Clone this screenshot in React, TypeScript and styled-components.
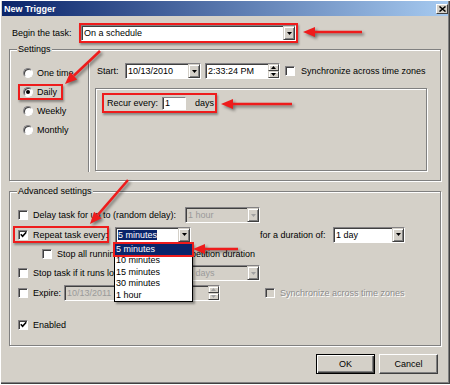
import styled, { createGlobalStyle } from 'styled-components';
import { FC, ReactNode } from 'react';

const FACE = '#d4d0c8';
const NAVY = '#0a246a';
const RED = '#ee1c1c';

const GlobalStyle = createGlobalStyle`
	html, body {
		margin: 0;
		padding: 0;
		background: #fff;
	}
	body {
		font-family: 'Liberation Sans', Arial, sans-serif;
		font-size: 9px;
		color: #000;
	}
`;

const ARROWS = [
	{ x1: 362, y1: 32, x2: 303, y2: 32 },
	{ x1: 100, y1: 51, x2: 65, y2: 84 },
	{ x1: 292, y1: 104, x2: 221, y2: 104 },
	{ x1: 128, y1: 180, x2: 90, y2: 224 },
	{ x1: 238, y1: 249, x2: 193, y2: 249 },
];

const LIST = ['5 minutes', '10 minutes', '15 minutes', '30 minutes', '1 hour'];

interface IComboProps {
	width: number;
	value: string;
	ml?: number;
	disabled?: boolean;
	selected?: boolean;
	children?: ReactNode;
}

const DownArrow: FC = () => (
	<svg width='5' height='3' viewBox='0 0 5 3'>
		<path d='M0 0h5L2.5 3z' fill='currentColor' />
	</svg>
);

const UpArrow: FC = () => (
	<svg width='5' height='3' viewBox='0 0 5 3'>
		<path d='M0 3h5L2.5 0z' fill='currentColor' />
	</svg>
);

const Combo: FC<IComboProps> = ({ width, value, ml, disabled, selected, children }) => (
	<Field $w={width} $ml={ml} $disabled={disabled}>
		<FieldText>
			<Value $selected={selected}>{value}</Value>
		</FieldText>
		<DropButton $disabled={disabled}>
			<DownArrow />
		</DropButton>
		{children}
	</Field>
);

const Spin: FC<IComboProps> = ({ width, value, ml, disabled }) => (
	<Field $w={width} $ml={ml} $disabled={disabled}>
		<FieldText>{value}</FieldText>
		<Spinner $disabled={disabled}>
			<SpinHalf>
				<UpArrow />
			</SpinHalf>
			<SpinHalf>
				<DownArrow />
			</SpinHalf>
		</Spinner>
	</Field>
);

const Check: FC<{ checked?: boolean; disabled?: boolean; ml?: number }> = ({ checked, disabled, ml }) => (
	<CheckBox $disabled={disabled} $ml={ml}>
		{checked && (
			<svg width='7' height='7' viewBox='0 0 7 7'>
				<path d='M0.8 3.2 L2.6 5.2 L6.2 1.2' stroke='#000' strokeWidth='1.6' fill='none' />
			</svg>
		)}
	</CheckBox>
);

const arrowHead = (a: { x1: number; y1: number; x2: number; y2: number }) => {
	const len = Math.hypot(a.x2 - a.x1, a.y2 - a.y1);
	const dx = (a.x2 - a.x1) / len;
	const dy = (a.y2 - a.y1) / len;
	const bx = a.x2 - dx * 12;
	const by = a.y2 - dy * 12;
	return {
		bx,
		by,
		points: `${a.x2},${a.y2} ${bx - dy * 5},${by + dx * 5} ${bx + dy * 5},${by - dx * 5}`,
	};
};

const App: FC = () => (
	<>
		<GlobalStyle />
		<Window>
			<TitleBar>
				<Title>New Trigger</Title>
				<CloseButton>
					<svg width='7' height='6' viewBox='0 0 7 6'>
						<path d='M0.5 0.5 L6.5 5.5 M6.5 0.5 L0.5 5.5' stroke='#000' strokeWidth='1.5' />
					</svg>
				</CloseButton>
			</TitleBar>
			<Body>
				<BeginRow>
					<Label $w={70} $pl={3}>
						Begin the task:
					</Label>
					<Mark>
						<Combo width={215} value='On a schedule' />
					</Mark>
				</BeginRow>

				<Group $mt={6}>
					<Legend>Settings</Legend>
					<SettingsBody>
						<RadioCol>
							<Option>
								<Radio />
								<span>One time</span>
							</Option>
							<Option>
								<Mark $ml={-5} $pl={3} $pr={4} $h={16}>
									<Radio $checked />
									<Label $ml={4}>Daily</Label>
								</Mark>
							</Option>
							<Option>
								<Radio />
								<span>Weekly</span>
							</Option>
							<Option>
								<Radio />
								<span>Monthly</span>
							</Option>
						</RadioCol>
						<Separator />
						<RightCol>
							<StartRow>
								<Label $w={30} $pl={2}>
									Start:
								</Label>
								<Combo width={76} value='10/13/2010' />
								<Spin width={75} ml={4} value='2:33:24 PM' />
								<Check ml={5} />
								<Label $ml={6}>Synchronize across time zones</Label>
							</StartRow>
							<InnerPanel>
								<Mark $pl={3} $pr={1} $h={20}>
									<Label $w={55}>Recur every:</Label>
									<RecurInput>1</RecurInput>
									<Label $ml={9}>days</Label>
								</Mark>
							</InnerPanel>
						</RightCol>
					</SettingsBody>
				</Group>

				<Group $mt={10}>
					<Legend>Advanced settings</Legend>
					<AdvBody>
						<Row $h={20}>
							<Check />
							<Label $w={152} $ml={5}>
								Delay task for up to (random delay):
							</Label>
							<Combo width={75} value='1 hour' disabled />
						</Row>
						<Row $h={19}>
							<Mark $ml={-5} $pl={3} $pr={2} $h={17}>
								<Check checked />
								<Label $w={72} $ml={5}>
									Repeat task every:
								</Label>
							</Mark>
							<Combo width={76} ml={6} value='5 minutes' selected>
								<DropList>
									{LIST.map((item, i) => (
										<ListItem key={item} $active={i === 0}>
											{item}
										</ListItem>
									))}
								</DropList>
							</Combo>
							<Label $w={73} $ml={69}>
								for a duration of:
							</Label>
							<Combo width={72} value='1 day' />
						</Row>
						<Row $h={19}>
							<Check ml={24} />
							<Label $ml={5}>Stop all running tasks at end of repetition duration</Label>
						</Row>
						<Row $h={20}>
							<Check />
							<Label $w={152} $ml={5}>
								Stop task if it runs longer than:
							</Label>
							<Combo width={75} value='3 days' disabled />
						</Row>
						<Row $h={19}>
							<Check />
							<Label $w={31} $ml={5}>
								Expire:
							</Label>
							<Combo width={72} value='10/13/2011' disabled />
							<Spin width={80} ml={4} value='2:33:24 PM' disabled />
							<Check ml={45} disabled />
							<Label $ml={5} $disabled>
								Synchronize across time zones
							</Label>
						</Row>
						<Row $h={19} $mt={13}>
							<Check checked />
							<Label $ml={5}>Enabled</Label>
						</Row>
					</AdvBody>
				</Group>

				<Footer>
					<Button $default>OK</Button>
					<Button>Cancel</Button>
				</Footer>
			</Body>

			<Annotations width='450' height='385' viewBox='0 0 450 385'>
				{ARROWS.map((a, i) => {
					const h = arrowHead(a);
					return (
						<g key={i}>
							<line x1={a.x1} y1={a.y1} x2={h.bx} y2={h.by} stroke={RED} strokeWidth='2.5' />
							<polygon points={h.points} fill={RED} />
						</g>
					);
				})}
			</Annotations>
		</Window>
	</>
);

const Window = styled.div`
	position: relative;
	width: 450px;
	height: 384px;
	box-sizing: border-box;
	padding: 1px 2px 0 2px;
	background: ${FACE};
	box-shadow: inset 1px 1px #fff, inset -1px -1px #404040, inset -2px -2px #808080;
`;

const TitleBar = styled.div`
	height: 15px;
	display: flex;
	align-items: center;
	justify-content: space-between;
	padding-left: 2px;
	background: linear-gradient(to right, ${NAVY}, #a6caf0);
`;

const Title = styled.span`
	color: #fff;
	font-weight: bold;
	font-size: 9px;
`;

const CloseButton = styled.span`
	width: 12px;
	height: 10px;
	box-sizing: border-box;
	display: flex;
	align-items: center;
	justify-content: center;
	background: ${FACE};
	border: 1px solid;
	border-color: #fff #404040 #404040 #fff;
`;

const Body = styled.div`
	padding: 7px 7px 0;
	display: flex;
	flex-direction: column;
`;

const BeginRow = styled.div`
	display: flex;
	align-items: center;
	height: 20px;
`;

const Label = styled.span<{ $w?: number; $ml?: number; $pl?: number; $disabled?: boolean }>`
	flex: none;
	box-sizing: border-box;
	width: ${p => (p.$w ? `${p.$w}px` : 'auto')};
	margin-left: ${p => p.$ml ?? 0}px;
	padding-left: ${p => p.$pl ?? 0}px;
	white-space: nowrap;
	color: ${p => (p.$disabled ? '#8c8c8c' : 'inherit')};
	text-shadow: ${p => (p.$disabled ? '1px 1px #fff' : 'none')};
`;

const Mark = styled.span<{ $ml?: number; $pl?: number; $pr?: number; $h?: number }>`
	flex: none;
	display: inline-flex;
	align-items: center;
	box-sizing: border-box;
	height: ${p => (p.$h ? `${p.$h}px` : 'auto')};
	margin-left: ${p => p.$ml ?? 0}px;
	padding: 0 ${p => p.$pr ?? 0}px 0 ${p => p.$pl ?? 0}px;
	border: 2px solid ${RED};
	box-shadow: 1px 2px 2px rgba(0, 0, 0, 0.35);
`;

const Field = styled.div<{ $w: number; $ml?: number; $disabled?: boolean }>`
	position: relative;
	flex: none;
	display: flex;
	align-items: stretch;
	box-sizing: border-box;
	width: ${p => p.$w}px;
	height: 16px;
	margin-left: ${p => p.$ml ?? 0}px;
	border: 1px solid;
	border-color: #848284 #fff #fff #848284;
	box-shadow: inset 1px 1px #404040;
	background: ${p => (p.$disabled ? FACE : '#fff')};
	color: ${p => (p.$disabled ? '#9a9a9a' : '#000')};
`;

const FieldText = styled.span`
	flex: 1;
	min-width: 0;
	padding-left: 2px;
	line-height: 14px;
	white-space: nowrap;
	overflow: hidden;
`;

const Value = styled.span<{ $selected?: boolean }>`
	background: ${p => (p.$selected ? NAVY : 'transparent')};
	color: ${p => (p.$selected ? '#fff' : 'inherit')};
`;

const DropButton = styled.span<{ $disabled?: boolean }>`
	flex: none;
	width: 12px;
	box-sizing: border-box;
	display: flex;
	align-items: center;
	justify-content: center;
	background: ${FACE};
	border: 1px solid;
	border-color: ${FACE} #404040 #404040 ${FACE};
	box-shadow: inset 1px 1px #fff, inset -1px -1px #808080;
	color: ${p => (p.$disabled ? '#a0a0a0' : '#000')};
`;

const Spinner = styled.span<{ $disabled?: boolean }>`
	flex: none;
	width: 11px;
	display: flex;
	flex-direction: column;
	color: ${p => (p.$disabled ? '#a0a0a0' : '#000')};
`;

const SpinHalf = styled.span`
	flex: 1;
	display: flex;
	align-items: center;
	justify-content: center;
	background: ${FACE};
	border: 1px solid;
	border-color: ${FACE} #404040 #404040 ${FACE};
	box-shadow: inset 1px 1px #fff;
`;

const CheckBox = styled.span<{ $disabled?: boolean; $ml?: number }>`
	flex: none;
	width: 10px;
	height: 10px;
	box-sizing: border-box;
	margin-left: ${p => p.$ml ?? 0}px;
	display: inline-flex;
	align-items: center;
	justify-content: center;
	background: ${p => (p.$disabled ? FACE : '#fff')};
	border: 1px solid;
	border-color: #848284 #fff #fff #848284;
	box-shadow: inset 1px 1px #404040;
`;

const Radio = styled.span<{ $checked?: boolean }>`
	flex: none;
	width: 10px;
	height: 10px;
	box-sizing: border-box;
	border-radius: 50%;
	background: #fff;
	border: 1px solid;
	border-color: #848284 #fff #fff #848284;
	box-shadow: inset 1px 1px #404040;
	display: inline-flex;
	align-items: center;
	justify-content: center;
	&::after {
		content: '';
		display: ${p => (p.$checked ? 'block' : 'none')};
		width: 4px;
		height: 4px;
		border-radius: 50%;
		background: #000;
	}
`;

const Group = styled.div<{ $mt: number }>`
	position: relative;
	margin-top: ${p => p.$mt}px;
	border: 1px solid #808080;
	box-shadow: inset 1px 1px #fff, 1px 1px #fff;
`;

const Legend = styled.span`
	position: absolute;
	top: -6px;
	left: 7px;
	padding: 0 1px;
	line-height: 11px;
	background: ${FACE};
`;

const SettingsBody = styled.div`
	display: flex;
	align-items: stretch;
	padding: 12px 13px 8px 0;
`;

const RadioCol = styled.div`
	width: 78px;
	box-sizing: border-box;
	padding: 1px 0 0 13px;
	display: flex;
	flex-direction: column;
`;

const Option = styled.div`
	height: 19px;
	display: flex;
	align-items: center;
	gap: 4px;
	white-space: nowrap;
`;

const Separator = styled.div`
	width: 1px;
	background: #808080;
	box-shadow: 1px 0 #fff;
`;

const RightCol = styled.div`
	flex: 1;
	margin-left: 6px;
	padding-bottom: 1px;
	display: flex;
	flex-direction: column;
`;

const StartRow = styled.div`
	margin-top: 1px;
	height: 16px;
	display: flex;
	align-items: center;
`;

const InnerPanel = styled.div`
	margin-top: 9px;
	height: 83px;
	box-sizing: border-box;
	padding: 4px 0 0 6px;
	display: flex;
	align-items: flex-start;
	border: 1px solid #808080;
	box-shadow: inset 1px 1px #fff, 1px 1px #fff;
`;

const RecurInput = styled.span`
	flex: none;
	width: 24px;
	height: 13px;
	box-sizing: border-box;
	padding-left: 2px;
	line-height: 11px;
	background: #fff;
	border: 1px solid;
	border-color: #848284 #fff #fff #848284;
	box-shadow: inset 1px 0 #404040;
`;

const AdvBody = styled.div`
	padding: 13px 0 11px 8px;
	display: flex;
	flex-direction: column;
`;

const Row = styled.div<{ $h: number; $mt?: number }>`
	height: ${p => p.$h}px;
	margin-top: ${p => p.$mt ?? 0}px;
	display: flex;
	align-items: center;
`;

const DropList = styled.div`
	position: absolute;
	top: calc(100% + 1px);
	left: -2px;
	width: 79px;
	box-sizing: border-box;
	z-index: 2;
	background: #fff;
	color: #000;
	border: 1px solid #000;
	box-shadow: 2px 2px 2px rgba(0, 0, 0, 0.35);
`;

const ListItem = styled.div<{ $active?: boolean }>`
	height: 11.5px;
	line-height: 11.5px;
	padding-left: 1px;
	white-space: nowrap;
	background: ${p => (p.$active ? NAVY : 'transparent')};
	color: ${p => (p.$active ? '#fff' : '#000')};
	outline: ${p => (p.$active ? `2px solid ${RED}` : 'none')};
`;

const Footer = styled.div`
	margin-top: 8px;
	padding-right: 3px;
	display: flex;
	justify-content: flex-end;
	gap: 4px;
`;

const Button = styled.button<{ $default?: boolean }>`
	width: 59px;
	height: 20px;
	padding: 0;
	box-sizing: border-box;
	font: inherit;
	color: #000;
	background: ${FACE};
	border: 1px solid;
	border-color: ${p => (p.$default ? '#000' : '#fff #404040 #404040 #fff')};
	box-shadow: ${p =>
		p.$default
			? 'inset 1px 1px #fff, inset -1px -1px #404040, inset -2px -2px #808080'
			: 'inset -1px -1px #808080'};
`;

const Annotations = styled.svg`
	position: absolute;
	top: 0;
	left: 0;
	z-index: 3;
	pointer-events: none;
	filter: drop-shadow(2px 2px 1.5px rgba(0, 0, 0, 0.45));
`;

export default App;
